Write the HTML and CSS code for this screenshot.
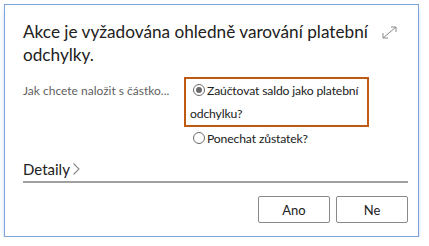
FILE: index.html
```html
<!DOCTYPE html>
<html lang="cs">
<head>
  <meta charset="UTF-8">
  <title>Akce je vyžadována</title>
  <link rel="stylesheet" href="styles.css">
</head>
<body>
  <div class="dialog">
    <div class="dialog-head">
      <h1 class="title">Akce je vyžadována ohledně varování platební odchylky.</h1>
      <svg class="expand" width="17" height="15" viewBox="0 0 17 15">
        <path d="M2 13 L15 2 M10 2 H15 V7 M2 8 V13 H7" fill="none" stroke="#8a8a8a" stroke-width="1"/>
      </svg>
    </div>

    <div class="field">
      <div class="field-label">Jak chcete naložit s částko...</div>
      <div class="options">
        <label class="option option-focus"><span class="radio checked"></span>Zaúčtovat saldo jako platební odchylku?</label>
        <label class="option"><span class="radio"></span>Ponechat zůstatek?</label>
      </div>
    </div>

    <div class="details">Detaily<svg class="chev" width="9" height="14" viewBox="0 0 9 14"><path d="M1.5 1.5 L7 7 L1.5 12.5" fill="none" stroke="#8a8a8a" stroke-width="1.1"/></svg></div>

    <div class="actions">
      <button class="btn">Ano</button>
      <button class="btn">Ne</button>
    </div>
  </div>
</body>
</html>
```

FILE: styles.css
```css
body {
  margin: 0;
  background: #fff;
  font-family: Lato, sans-serif;
  color: #212121;
}

.dialog {
  margin: 4px 0 0 4px;
  width: 415px;
  height: 233px;
  box-sizing: border-box;
  border: 1px solid #7ea3dc;
  box-shadow: 0 4px 4px -1px rgba(90, 140, 215, 0.55);
  padding: 15px 0 0 18px;
}

.dialog-head {
  display: flex;
  align-items: flex-start;
}

.title {
  font-size: 17.2px;
  font-weight: 400;
  line-height: 23px;
  margin: 0;
  width: 350px;
}

.expand {
  margin: 5px 0 0 8px;
}

.field {
  display: flex;
  margin-top: 11px;
}

.field-label {
  width: 161px;
  font-size: 12px;
  color: #5f5f5f;
  line-height: 23px;
  margin-top: 2px;
}

.options {
  width: 185px;
}

.option {
  display: block;
  font-size: 12.2px;
  letter-spacing: -0.15px;
  line-height: 23px;
  padding-left: 4px;
}

.option-focus {
  border: 2px solid #c05a12;
}

.option + .option {
  padding-left: 6px;
}

.radio {
  display: inline-block;
  width: 10px;
  height: 10px;
  border: 1px solid #6b6b6b;
  border-radius: 50%;
  margin: 0 2px 0 3px;
  vertical-align: -1px;
  position: relative;
}

.radio.checked::after {
  content: "";
  position: absolute;
  left: 2px;
  top: 2px;
  width: 6px;
  height: 6px;
  border-radius: 50%;
  background: #6b6b6b;
}

.details {
  width: 385px;
  font-size: 15px;
  line-height: 22px;
  margin-top: 8px;
  padding-bottom: 1px;
  border-bottom: 2px solid #a0a0a0;
}

.chev {
  margin-left: 2px;
  vertical-align: -1px;
}

.actions {
  display: flex;
  justify-content: flex-end;
  gap: 6px;
  width: 385px;
  margin-top: 13px;
}

.btn {
  width: 72px;
  height: 27px;
  background: #fff;
  border: 1px solid #8a8a8a;
  border-radius: 2px;
  font-family: Lato, sans-serif;
  font-size: 13px;
  color: #212121;
}
```
